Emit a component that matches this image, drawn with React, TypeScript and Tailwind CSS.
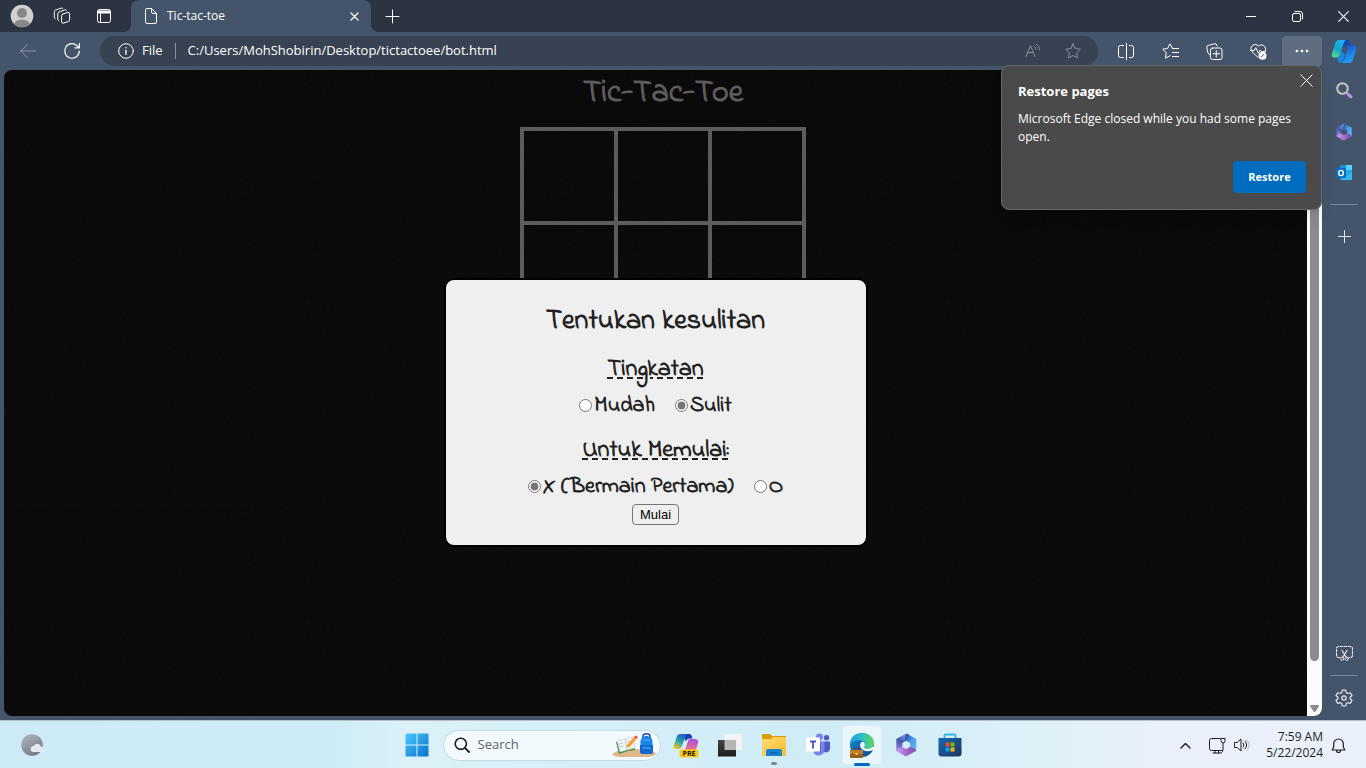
import { useState } from "react";
import type { ReactNode } from "react";

const boardCells = [
  [0, 1, 2],
  [3, 4, 5],
  [6, 7, 8],
];

function Line({ size = 16, children, className = "" }: { size?: number; children: ReactNode; className?: string }) {
  return (
    <svg
      width={size}
      height={size}
      viewBox={`0 0 ${size} ${size}`}
      fill="none"
      stroke="currentColor"
      strokeLinecap="round"
      strokeLinejoin="round"
      className={`shrink-0 ${className}`}
      aria-hidden="true"
    >
      {children}
    </svg>
  );
}

function TabStrip() {
  return (
    <header className="flex h-8 shrink-0 items-center bg-[#2b3440] text-white">
      <button aria-label="Profile" className="flex w-11 justify-center">
        <svg width="24" height="24" viewBox="0 0 24 24" aria-hidden="true">
          <defs>
            <clipPath id="avatar">
              <circle cx="12" cy="12" r="11.3" />
            </clipPath>
          </defs>
          <g clipPath="url(#avatar)">
            <rect width="24" height="24" fill="#d2d0ce" />
            <circle cx="12" cy="9" r="5" fill="#8a8886" />
            <ellipse cx="12" cy="21" rx="8" ry="5.6" fill="#8a8886" />
          </g>
        </svg>
      </button>
      <button aria-label="Workspaces" className="flex w-9 justify-center">
        <Line size={18}>
          <path d="M9.600 7.200 14.500 5.400a1.600 1.600 0 0 1 2.100 1.500v6a1.600 1.600 0 0 1-1.100 1.500l-4.800 1.700a1.600 1.600 0 0 1-2.100-1.500V8.700a1.600 1.600 0 0 1 1-1.500Z" />
          <path d="M5.800 13.800a1.600 1.600 0 0 1-1-1.500V6.600a1.600 1.600 0 0 1 1.100-1.500l6-2.200a1.500 1.500 0 0 1 1.500.3" />
          <path d="M2.300 11.800a1.600 1.600 0 0 1-1-1.500V4.700a1.600 1.600 0 0 1 1.100-1.500l6-2.100a1.500 1.500 0 0 1 1.500.3" />
        </Line>
      </button>
      <button aria-label="Tab actions" className="flex w-[47px] justify-center">
        <Line size={16}>
          <rect x="1.500" y="1.500" width="13" height="13" rx="2" />
          <path d="M2 3h12v2H2Z" fill="currentColor" />
          <path d="M4.500 5v9.500" />
        </Line>
      </button>
      <div className="flex h-8 items-end">
        <span className="-ml-1 size-2 bg-[radial-gradient(circle_at_0_0,transparent_8px,#44546a_8px)]" />
        <div className="flex h-8 w-60 items-center rounded-t-lg bg-[#44546a] px-3">
          <Line size={16}>
            <path d="M2.500 2A1.500 1.500 0 0 1 4 .5h4.500L13.500 5.500V14a1.500 1.500 0 0 1-1.500 1.500H4A1.500 1.500 0 0 1 2.500 14Z" />
            <path d="M8.500.5V4A1.500 1.500 0 0 0 10 5.500h3.500" />
          </Line>
          <span className="ml-2 flex-1 text-xs">Tic-tac-toe</span>
          <button aria-label="Close tab">
            <Line size={9}>
              <path d="m1 1 7 7M8 1 1 8" strokeWidth="1.200" />
            </Line>
          </button>
        </div>
        <span className="size-2 bg-[radial-gradient(circle_at_100%_0,transparent_8px,#44546a_8px)]" />
      </div>
      <button aria-label="New tab" className="ml-1.5">
        <Line size={15}>
          <path d="M7.500 1v13M1 7.500h13" />
        </Line>
      </button>
      <div className="ml-auto flex h-8">
        <button aria-label="Minimize" className="flex w-[46px] items-center justify-center">
          <Line size={10}>
            <path d="M0 5.500h10" />
          </Line>
        </button>
        <button aria-label="Restore down" className="flex w-[46px] items-center justify-center">
          <Line size={11}>
            <rect x=".5" y="2.500" width="8" height="8" rx="1.500" />
            <path d="M3 .5h5a2.500 2.500 0 0 1 2.500 2.500v5" />
          </Line>
        </button>
        <button aria-label="Close window" className="flex w-[46px] items-center justify-center">
          <Line size={11}>
            <path d="m.7.7 9.600 9.600M10.300.7.7 10.300" strokeWidth="1.100" />
          </Line>
        </button>
      </div>
    </header>
  );
}

function Toolbar() {
  return (
    <div className="flex h-[38px] shrink-0 items-center py-1 pl-1.5 text-white">
      <button aria-label="Back" className="flex w-11 justify-center text-[#8d97a4]">
        <Line size={16}>
          <path d="M15.500 8H.8M7.500 1.300.8 8l6.700 6.700" />
        </Line>
      </button>
      <button aria-label="Refresh" className="flex w-11 justify-center">
        <Line size={18}>
          <path d="M16.300 9A7.300 7.300 0 1 1 14.200 3.800L16 5.500" strokeWidth="1.200" />
          <path d="M16.300 1.500v4.300H12" strokeWidth="1.200" />
        </Line>
      </button>
      <div className="ml-1.5 flex h-[30px] flex-1 items-center rounded-full bg-[#374252] pl-[18px] pr-[17px]">
        <Line size={16}>
          <circle cx="8" cy="8" r="7.300" />
          <path d="M8 7.300v4" strokeWidth="1.300" />
          <circle cx="8" cy="4.700" r=".8" fill="currentColor" stroke="none" />
        </Line>
        <span className="ml-2 text-[13px]">File</span>
        <span className="mx-3 h-4 w-px bg-[#8a93a0]" />
        <input
          aria-label="Address"
          readOnly
          value="C:/Users/MohShobirin/Desktop/tictactoee/bot.html"
          className="min-w-0 flex-1 bg-transparent text-[13px] outline-none"
        />
        <button aria-label="Read aloud" className="mr-3 flex w-10 justify-center text-[#88909b]">
          <Line size={16}>
            <path d="m1 13.500 4.500-11 4.500 11M2.600 9.500h5.800" />
            <path d="M9.500 3.300a3.500 3.500 0 0 1 1.600 3.200M11.300 1.300A6 6 0 0 1 14.500 7" />
          </Line>
        </button>
        <button aria-label="Add to favorites" className="flex w-4 justify-center text-[#88909b]">
          <Line size={16}>
            <path d="m8 .8 2.200 4.700 5.100.7-3.700 3.600.9 5.200L8 12.500 3.500 15l.9-5.200L.7 6.200l5.100-.7Z" />
          </Line>
        </button>
      </div>
      <div className="ml-2 flex gap-1">
        <button aria-label="Split screen" className="flex h-[30px] w-10 items-center justify-center">
          <Line size={17}>
            <path d="M8.500.5v16M5.500 2.500h-3a2 2 0 0 0-2 2v8a2 2 0 0 0 2 2h3M11.500 2.500h2a2 2 0 0 1 2 2v8a2 2 0 0 1-2 2h-2" />
          </Line>
        </button>
        <button aria-label="Favorites" className="flex h-[30px] w-10 items-center justify-center">
          <Line size={17}>
            <path d="M11 5.500 10.300 5 8 .8 5.600 5.400.8 6.200l3.400 3.500-.8 5.500L8 12.700" />
            <path d="M10.500 5.500h6M10.500 9.500h6M10.500 13.500h6" />
          </Line>
        </button>
        <button aria-label="Collections" className="flex h-[30px] w-10 items-center justify-center">
          <Line size={17}>
            <path d="M3.500 11.500A2 2 0 0 1 2 10L.8 4.800a2 2 0 0 1 1.500-2.400L8.500.8a2 2 0 0 1 2.400 1.500l.2.800" />
            <rect x="4.500" y="5" width="11.500" height="11.500" rx="2" />
            <path d="M10.250 7.500v6.500M7 10.750h6.500" />
          </Line>
        </button>
        <button aria-label="Browser essentials" className="flex h-[30px] w-10 items-center justify-center">
          <Line size={17}>
            <path d="M8 14.500 2 8.700A4.300 4.300 0 0 1 8.500 3a4.300 4.300 0 0 1 6.800 5" />
            <path d="M.5 7.500h3.700l1.600-2.800 2.500 5.500 1.900-3.200 1.300 1.500h4" />
            <circle cx="12.500" cy="12.700" r="4" fill="currentColor" stroke="none" />
            <path d="m11.200 14 2.600-2.600" stroke="#44546a" />
          </Line>
        </button>
        <button aria-label="Settings and more" className="flex h-[30px] w-10 items-center justify-center rounded bg-[#5f6d80]">
          <svg width="14" height="4" viewBox="0 0 14 4" fill="currentColor" aria-hidden="true">
            <circle cx="2" cy="2" r="1.300" />
            <circle cx="7" cy="2" r="1.300" />
            <circle cx="12" cy="2" r="1.300" />
          </svg>
        </button>
      </div>
    </div>
  );
}

function Microsoft365Icon({ size, id }: { size: number; id: string }) {
  return (
    <svg width={size} height={size} viewBox="0 0 24 24" strokeLinejoin="round" aria-hidden="true">
      <defs>
        <linearGradient id={`${id}a`} x1=".7" y1="0" x2=".2" y2="1">
          <stop offset="0" stopColor="#7f9be8" />
          <stop offset=".5" stopColor="#4a55a8" />
          <stop offset="1" stopColor="#8f86e0" />
        </linearGradient>
        <linearGradient id={`${id}b`} x1="0" y1="0" x2="1" y2="1">
          <stop offset="0" stopColor="#234a94" />
          <stop offset=".5" stopColor="#4a9df0" />
          <stop offset="1" stopColor="#5fb8f4" />
        </linearGradient>
        <linearGradient id={`${id}c`} x1="0" y1="0" x2="1" y2="0">
          <stop offset="0" stopColor="#c3a4f4" />
          <stop offset=".5" stopColor="#a768cf" />
          <stop offset="1" stopColor="#7650a8" />
        </linearGradient>
      </defs>
      <path d="M12 1.500 14.500 2 12 7.200 7.500 9.700V14L3 17.500V6.500Z" fill={`url(#${id}a)`} stroke={`url(#${id}a)`} strokeWidth="1.500" />
      <path d="M12.500 1.500 21.500 6.500V17L17 14V9.700L11.500 6.700Z" fill={`url(#${id}b)`} stroke={`url(#${id}b)`} strokeWidth="1.500" />
      <path d="M3 17.500 7.500 14.500 12 17 16.500 14.500 21.500 17.300 12 22.700Z" fill={`url(#${id}c)`} stroke={`url(#${id}c)`} strokeWidth="1.500" />
    </svg>
  );
}

function CopilotIcon() {
  return (
    <svg width="26" height="25" viewBox="0 0 26 25" aria-hidden="true">
      <defs>
        <linearGradient id="copilotLeft" x1=".6" y1="0" x2=".2" y2="1">
          <stop offset="0" stopColor="#16b4f4" />
          <stop offset=".5" stopColor="#16a3cf" />
          <stop offset="1" stopColor="#5fdc80" />
        </linearGradient>
        <linearGradient id="copilotRight" x1=".3" y1="0" x2=".6" y2="1">
          <stop offset="0" stopColor="#1c52c8" />
          <stop offset=".6" stopColor="#1d87ec" />
          <stop offset="1" stopColor="#1fa2f5" />
        </linearGradient>
      </defs>
      <path d="M13.500 1H16c2 0 2.500 1 3 3l.5 2h-3c-2 0-2.600 1-3.200 3L11 6Z" fill="#1549b5" />
      <path d="M8 1h7c-1.500.6-2 2-2.500 3.500L9.300 15c-.6 2-1.600 3.500-4 3.500H3.500C1 18.500.3 16.700 1 14.500L4 4.500C4.700 2.200 6 1 8 1Z" fill="url(#copilotLeft)" />
      <path d="M16.500 6H22c2.800 0 4 1.800 3.300 4.300l-3 9.700c-.8 2.500-2 4-4.500 4h-7c1.400-.7 2-2 2.500-3.500l3-11C16.700 7.700 17 6.500 16.500 6Z" fill="url(#copilotRight)" />
      <path d="M5.500 18.500c2.200 0 3.200-1.400 3.800-3.500l1-3 3.500 3-1 4.500c-.6 2-1.400 4.500-3.300 4.500-2.500 0-2-3-4-5.500Z" fill="#1689df" />
    </svg>
  );
}

function Sidebar() {
  return (
    <aside className="flex w-11 shrink-0 flex-col items-center text-[#e2e6eb]">
      <button aria-label="Copilot" className="flex h-[38px] items-center">
        <CopilotIcon />
      </button>
      <button aria-label="Search" className="flex h-[41px] items-center">
        <svg width="17" height="17" viewBox="0 0 17 17" fill="none" aria-hidden="true">
          <circle cx="6.500" cy="6.500" r="5.300" stroke="#c9c7c5" strokeWidth="2" />
          <path d="m11.800 11.800 3.200 3" stroke="#bd8df0" strokeWidth="3" strokeLinecap="round" />
        </svg>
      </button>
      <button aria-label="Microsoft 365" className="flex h-[41px] items-center">
        <Microsoft365Icon size={18} id="ms" />
      </button>
      <button aria-label="Outlook" className="flex h-[41px] items-center">
        <svg width="16" height="16" viewBox="0 0 16 16" aria-hidden="true">
          <rect x="4" width="12" height="15" rx="1" fill="#1490df" />
          <path d="M10 0h5a1 1 0 0 1 1 1v4h-6Z" fill="#50d9ff" />
          <path d="M4 5h6v5H4Z" fill="#0364b8" />
          <path d="M10 5h6v4l-6 2Z" fill="#28a8ea" />
          <path d="m16 7.500-12 7.500h11a1 1 0 0 0 1-1Z" fill="#35b8f1" />
          <rect y="3" width="10" height="10" rx="1" fill="#0f6cbd" />
          <ellipse cx="5" cy="8" rx="2.300" ry="2.600" fill="none" stroke="#fff" strokeWidth="1.400" />
        </svg>
      </button>
      <span className="my-[11px] h-px w-7 bg-[#7c8898]" />
      <button aria-label="Customize" className="flex h-[41px] items-center">
        <Line size={13}>
          <path d="M6.500.5v12M.5 6.500h12" />
        </Line>
      </button>
      <button aria-label="Screenshot" className="mt-auto flex h-11 items-center">
        <Line size={17}>
          <path d="M4 12.500H2.500a2 2 0 0 1-2-2v-7a2 2 0 0 1 2-2h12a2 2 0 0 1 2 2v7a2 2 0 0 1-2 2H13" strokeDasharray="2.500 1.500" strokeWidth="1.200" />
          <path d="m6 5.500 4 6.500M11 5.500 7 12" strokeWidth="1.200" />
          <circle cx="6.200" cy="13.700" r="1.600" />
          <circle cx="10.800" cy="13.700" r="1.600" />
        </Line>
      </button>
      <span className="h-px w-7 shrink-0 bg-[#7c8898]" />
      <button aria-label="Settings" className="flex h-11 items-center">
        <Line size={18}>
          <path
            d="M7.300 1.100h3.400l.6 2.500 1.500.9 2.500-.8 1.700 2.900-1.900 1.700v1.500l1.900 1.700-1.700 2.900-2.500-.8-1.500.9-.6 2.500H7.300l-.6-2.500-1.500-.9-2.500.8L1 11.500l1.900-1.700V8.300L1 6.600l1.700-2.900 2.500.8 1.500-.9Z"
            strokeWidth="1.200"
          />
          <circle cx="9" cy="9" r="2.100" strokeWidth="1.200" />
        </Line>
      </button>
    </aside>
  );
}

function Choice({ name, label, checked, onSelect }: { name: string; label: string; checked: boolean; onSelect: () => void }) {
  return (
    <label className="flex items-center gap-0.5 leading-6">
      <input type="radio" name={name} checked={checked} onChange={onSelect} className="mb-0.5 size-[13px] accent-[#767676]" />
      {label}
    </label>
  );
}

function DifficultyDialog() {
  const [level, setLevel] = useState("Sulit");
  const [mark, setMark] = useState("X");
  return (
    <section
      role="dialog"
      aria-labelledby="dialog-title"
      className="absolute left-1/2 top-[208px] flex w-[424px] -translate-x-1/2 flex-col items-center rounded-[10px] border-2 border-black bg-[#efefef] pb-5 pt-[22px] font-['Indie_Flower',cursive] text-[22px] font-bold text-[#222]"
    >
      <h2 id="dialog-title" className="text-[28px] leading-10">
        Tentukan kesulitan
      </h2>
      <h3 className="mt-3.5 text-2xl leading-7 underline decoration-dashed decoration-2 underline-offset-2">Tingkatan</h3>
      <div className="mt-2.5 flex gap-5">
        <Choice name="level" label="Mudah" checked={level === "Mudah"} onSelect={() => setLevel("Mudah")} />
        <Choice name="level" label="Sulit" checked={level === "Sulit"} onSelect={() => setLevel("Sulit")} />
      </div>
      <h3 className="mt-[19px] text-2xl leading-7 underline decoration-dashed decoration-2 underline-offset-2">Untuk Memulai:</h3>
      <div className="mt-2.5 flex gap-5">
        <Choice name="mark" label="X (Bermain Pertama)" checked={mark === "X"} onSelect={() => setMark("X")} />
        <Choice name="mark" label="O" checked={mark === "O"} onSelect={() => setMark("O")} />
      </div>
      <button className="mt-[5px] h-[21px] rounded-sm border border-[#767676] px-[7px] font-['Liberation_Sans',sans-serif] text-[13px] font-normal leading-4 text-black">
        Mulai
      </button>
    </section>
  );
}

function GamePage() {
  return (
    <div className="mb-1 ml-1 flex min-h-0 flex-1 overflow-hidden rounded-lg bg-[#090909]">
      <main className="relative min-w-0 flex-1 overflow-hidden">
        <svg className="absolute inset-0 size-full opacity-5" aria-hidden="true">
          <filter id="grain">
            <feTurbulence type="fractalNoise" baseFrequency="0.8" numOctaves="2" />
            <feColorMatrix values="0 0 0 0 .35  0 0 0 0 .35  0 0 0 0 .35  1 1 0 0 -.7" />
          </filter>
          <rect width="100%" height="100%" filter="url(#grain)" />
        </svg>
        <div className="flex flex-col items-center pl-[15px] text-[#5c5c5c]">
          <h1 className="font-['Indie_Flower',cursive] text-[32px] font-bold leading-[48px]">Tic-Tac-Toe</h1>
          <table className="mt-[9px] border-collapse">
            <tbody>
              {boardCells.map((row) => (
                <tr key={row[0]}>
                  {row.map((cell) => (
                    <td key={cell} className="h-[94px] w-[94px] border-4 border-[#5c5c5c] p-0" />
                  ))}
                </tr>
              ))}
            </tbody>
          </table>
        </div>
        <DifficultyDialog />
      </main>
      <div className="flex w-[15px] flex-col items-center bg-[#fcfcfc] py-1">
        <svg width="9" height="7" viewBox="0 0 9 7" fill="#8b8b8b" aria-hidden="true">
          <path d="M4.500 0 9 7H0Z" />
        </svg>
        <span className="mt-1 w-[9px] flex-1 rounded-full bg-[#8b8b8b]" />
        <svg className="mt-11" width="9" height="7" viewBox="0 0 9 7" fill="#8b8b8b" aria-hidden="true">
          <path d="M1 0h7a1 1 0 0 1 .8 1.500L5.400 6.500a1 1 0 0 1-1.800 0L.2 1.500A1 1 0 0 1 1 0Z" />
        </svg>
      </div>
    </div>
  );
}

function RestorePopup() {
  return (
    <section
      aria-label="Restore pages"
      className="absolute right-11 top-[33px] flex w-[321px] flex-col rounded-lg border border-[#676767] bg-[#4a4a4a] p-4 pr-[15px] text-white shadow-lg"
    >
      <button aria-label="Close" className="absolute right-2 top-2">
        <Line size={13}>
          <path d="m.8.8 11.400 11.400M12.200.8.8 12.200" />
        </Line>
      </button>
      <h2 className="text-[13px] font-bold leading-[18px]">Restore pages</h2>
      <p className="mt-2.5 text-xs leading-[18px]">Microsoft Edge closed while you had some pages open.</p>
      <button className="mt-[15px] h-8 w-[73px] self-end rounded-sm bg-[#006cbe] text-[11px] font-bold">Restore</button>
    </section>
  );
}

function TaskButton({ label, children, active = false }: { label: string; children: ReactNode; active?: boolean }) {
  return (
    <button aria-label={label} className="relative flex h-12 w-11 items-center justify-center">
      {active && <span className="absolute inset-x-[3px] inset-y-[5px] rounded bg-[#e9f6fc] ring-1 ring-[#dceef6]" />}
      <span className="relative">{children}</span>
    </button>
  );
}

function Taskbar() {
  return (
    <footer className="grid h-12 shrink-0 grid-cols-[1fr_auto_1fr] items-center border-t border-[#b4c0c8] bg-[linear-gradient(90deg,#cdebf7_0%,#cdecf7_24%,#dbf1f7_30%,#cfecf7_60%,#dcf0f8_75%,#e9f0fa_85%,#eaf1fb_100%)] pb-0.5 text-[#1c1c1c]">
      <button aria-label="Weather" className="ml-5 w-6">
        <svg width="24" height="24" viewBox="0 0 24 24" aria-hidden="true">
          <defs>
            <linearGradient id="moon" x1="0" y1="0" x2=".6" y2="1">
              <stop offset="0" stopColor="#b4bac4" />
              <stop offset="1" stopColor="#747b86" />
            </linearGradient>
          </defs>
          <circle cx="12" cy="12" r="10.800" fill="url(#moon)" />
          <path d="M13.500 19a3 3 0 0 1 .2-6 4 4 0 0 1 7.300.5 2.800 2.800 0 0 1 .3 5.500Z" fill="#e6e8ec" />
        </svg>
      </button>
      <div className="flex items-center">
        <TaskButton label="Start">
          <svg width="24" height="24" viewBox="0 0 24 24" aria-hidden="true">
            <defs>
              <linearGradient id="win" x1="0" y1="0" x2="1" y2="1">
                <stop offset="0" stopColor="#4cc9fb" />
                <stop offset="1" stopColor="#0570cf" />
              </linearGradient>
            </defs>
            <path d="M1.500.5h10v11h-11v-10a1 1 0 0 1 1-1ZM12.500.5h10a1 1 0 0 1 1 1v10h-11ZM.5 12.500h11v11h-10a1 1 0 0 1-1-1ZM12.500 12.500h11v10a1 1 0 0 1-1 1h-10Z" fill="url(#win)" />
          </svg>
        </TaskButton>
        <label className="mx-1 flex h-[31px] w-[218px] items-center rounded-full border border-[#c3dbe4] bg-[#f3fafd] pl-2.5 pr-1">
          <Line size={16}>
            <circle cx="6.800" cy="6.800" r="5.600" strokeWidth="1.600" />
            <path d="m11 11 4 4" strokeWidth="1.800" />
          </Line>
          <input
            aria-label="Search"
            placeholder="Search"
            className="ml-2 w-full min-w-0 flex-1 bg-transparent text-[13px] outline-none placeholder:text-[#5d6265]"
          />
          <svg width="44" height="25" viewBox="0 0 44 25" className="shrink-0" aria-hidden="true">
            <path d="M0 21c2-2 9-5 20-5s21 2 24 4c-1 3-6 4-9 4H9C5 24 1 23 0 21Z" fill="#dfb78a" />
            <path d="m4 9 9-2 8-1 2 11-7 1-9 3Z" fill="#3f8f4b" />
            <path d="m5 8 8-2 2 11-7 2ZM13 6l8-2 2 11-8 2Z" fill="#f4f5f7" stroke="#b9bfc8" strokeWidth=".5" />
            <path d="m7 11 4-1M7.500 14l4-1M15 9l3-1" stroke="#9ba5c3" strokeWidth=".7" />
            <path d="m15 12 7-8 2.500 2-7 8-3 1Z" fill="#f6a12b" />
            <path d="m22 4 1.500-1.700 2.500 2L24.500 6Z" fill="#e8504c" />
            <path d="M31 5V3c0-3 7-3 7 0v2" fill="none" stroke="#164fae" strokeWidth="1.500" />
            <path d="M28.500 9c0-8 12-8 12 0v11h-12Z" fill="#1784e6" />
            <path d="M28 12h13v7a2 2 0 0 1-2 2h-9a2 2 0 0 1-2-2Z" fill="#1169d2" />
            <path d="M31 7h7M30.500 15h8" stroke="#64b8fa" />
          </svg>
        </label>
        <div className="-ml-px flex">
          <TaskButton label="Copilot preview">
            <svg width="26" height="26" viewBox="0 0 26 26" aria-hidden="true">
              <defs>
                <linearGradient id="cl" x1=".7" y1="0" x2=".2" y2="1">
                  <stop offset="0" stopColor="#2454d0" />
                  <stop offset=".5" stopColor="#27a3ad" />
                  <stop offset="1" stopColor="#f7c91d" />
                </linearGradient>
                <linearGradient id="cr" x1=".5" y1="0" x2=".4" y2="1">
                  <stop offset="0" stopColor="#a64fe4" />
                  <stop offset="1" stopColor="#f97282" />
                </linearGradient>
              </defs>
              <path d="M13 2h3c2 0 2.500 1 3.500 4.500h-3c-2 0-3 1-3.500 3L11 6Z" fill="#173fb0" />
              <path d="M7.500 2h7c-1.500.7-2 2-2.500 3.500L9 14c-.7 2-1.700 3-3.500 3H3c-2 0-3-1.600-2.300-3.600L3.700 5C4.500 2.800 5.500 2 7.500 2Z" fill="url(#cl)" />
              <path d="M16.500 7H21c3.500 0 5 2 4 4.500l-2.500 7H10c1.800-.5 2.500-2 3-3.500l2-6c.3-1 .8-1.700 1.500-2Z" fill="url(#cr)" />
              <rect x="6.500" y="17.500" width="19" height="8" rx="2" fill="#fcc915" />
              <text x="16" y="24.200" textAnchor="middle" className="fill-[#1e1600] font-['Open_Sans',sans-serif] text-[7px] font-bold">
                PRE
              </text>
            </svg>
          </TaskButton>
          <TaskButton label="Task view">
            <svg width="24" height="24" viewBox="0 0 24 24" aria-hidden="true">
              <defs>
                <linearGradient id="tvd" x1="0" y1="0" x2="0" y2="1">
                  <stop offset="0" stopColor="#454545" />
                  <stop offset="1" stopColor="#1b1b1b" />
                </linearGradient>
              </defs>
              <rect x="6.500" y="1" width="17.500" height="16" fill="#f3f3f3" />
              <rect x="0" y="7" width="18" height="16.500" fill="url(#tvd)" />
              <path d="M6.500 7H18v10H6.500Z" fill="#b4b4b4" />
            </svg>
          </TaskButton>
          <TaskButton label="File Explorer">
            <svg width="26" height="24" viewBox="0 0 26 24" aria-hidden="true">
              <defs>
                <linearGradient id="fold" x1="0" y1="0" x2="1" y2="1">
                  <stop offset="0" stopColor="#ffdb74" />
                  <stop offset="1" stopColor="#fabd30" />
                </linearGradient>
              </defs>
              <path d="M1 2a1 1 0 0 1 1-1h7l2 2h13a1 1 0 0 1 1 1v4H1Z" fill="#d99b08" />
              <path d="M1 6h9l2-2h12a1 1 0 0 1 1 1v17a1 1 0 0 1-1 1H2a1 1 0 0 1-1-1Z" fill="url(#fold)" />
              <path d="M5 23v-5a2 2 0 0 1 2-2h12a2 2 0 0 1 2 2v5Z" fill="#1583d4" />
              <path d="M9 20h8" stroke="#0b62a8" strokeWidth="1.500" />
            </svg>
            <span className="absolute -bottom-2 left-2.5 h-[3px] w-1.5 rounded-full bg-[#7d8a90]" />
          </TaskButton>
          <TaskButton label="Teams">
            <svg width="26" height="24" viewBox="0 0 26 24" aria-hidden="true">
              <circle cx="14.500" cy="4" r="3.500" fill="#7b83eb" />
              <circle cx="21.500" cy="4.800" r="2.700" fill="#5059c9" />
              <path d="M18 8.500h7v7.500a4 4 0 0 1-7 2Z" fill="#5059c9" />
              <path d="M9 8.500h10.500v8a6 6 0 0 1-10.500 4Z" fill="#7b83eb" />
              <path d="M15 8.500h1v10H9V8.500Z" fill="#5e66c7" />
              <rect x="1" y="4.500" width="14" height="14" rx="1" fill="#fff" />
              <path d="M5 8.500h6M8 8.500v7" stroke="#4b53bc" strokeWidth="1.800" />
            </svg>
          </TaskButton>
          <TaskButton label="Microsoft Edge" active>
            <svg width="26" height="26" viewBox="0 0 26 26" aria-hidden="true">
              <defs>
                <linearGradient id="e1" x1="0" y1=".3" x2="1" y2=".3">
                  <stop offset="0" stopColor="#1b9fdf" />
                  <stop offset=".5" stopColor="#2cc0c8" />
                  <stop offset="1" stopColor="#62d75a" />
                </linearGradient>
                <linearGradient id="e2" x1="0" y1="0" x2="1" y2="1">
                  <stop offset="0" stopColor="#1b88d8" />
                  <stop offset="1" stopColor="#0c4a8c" />
                </linearGradient>
              </defs>
              <circle cx="13" cy="13" r="12" fill="url(#e2)" />
              <path d="M1 13C1 5 6.500 1 13 1c7 0 12 4.500 12 10 0 4-3 6-6 6-3 0-4.500-1-4-2 1.500-2 1-5.500-3-6.500C7 7.500 3 9 1 13Z" fill="url(#e1)" />
              <path d="M14 9.800c-2.600.2-3.600 3-2.300 5.600 2 3.800 7.300 4.900 12.300 2.600l2 1V15l-2-.5c-2 2.500-6 3-8.300 1.800-1.200-.7-.7-1.300-.2-2.100.8-1.500.5-3.300-1.500-4.400Z" fill="#f0f9fd" />
              <rect x="1" y="18" width="13" height="8" rx="1" fill="#9a5c19" />
              <path d="M1 18h13v4H1Z" fill="#c27d2b" />
              <path d="M5.500 18v-1.500h4V18" stroke="#704010" fill="none" />
              <path d="M6.500 21h2v2h-2Z" fill="#ffd15c" />
            </svg>
            <span className="absolute -bottom-2 left-[5px] h-[3px] w-4 rounded-full bg-[#0067c0]" />
          </TaskButton>
          <TaskButton label="Microsoft 365">
            <Microsoft365Icon size={24} id="tb" />
          </TaskButton>
          <TaskButton label="Microsoft Store">
            <svg width="24" height="24" viewBox="0 0 24 24" aria-hidden="true">
              <defs>
                <linearGradient id="store" x1="0" y1="0" x2="1" y2="1">
                  <stop offset="0" stopColor="#1569b4" />
                  <stop offset="1" stopColor="#1e355c" />
                </linearGradient>
              </defs>
              <path d="M6.500 6V2.500a1 1 0 0 1 1-1h9a1 1 0 0 1 1 1V6" fill="none" stroke="#31b9ee" strokeWidth="1.800" />
              <path d="M.5 5h23v15.500a3 3 0 0 1-3 3h-17a3 3 0 0 1-3-3Z" fill="url(#store)" />
              <path d="M7.500 9.500h4v4h-4Z" fill="#f25022" />
              <path d="M12.500 9.500h4v4h-4Z" fill="#7fba00" />
              <path d="M7.500 14.500h4v4h-4Z" fill="#00a4ef" />
              <path d="M12.500 14.500h4v4h-4Z" fill="#ffb900" />
            </svg>
          </TaskButton>
        </div>
      </div>
      <div className="flex items-center justify-end pr-5">
        <button aria-label="Show hidden icons" className="mr-[18px]">
          <Line size={11}>
            <path d="m1 8 4.500-4.500L10 8" strokeWidth="1.400" />
          </Line>
        </button>
        <button aria-label="Network and volume" className="mr-4 flex items-center gap-2">
          <Line size={17}>
            <path d="M10.500 1.500h-8a2 2 0 0 0-2 2v8a2 2 0 0 0 2 2h10.300M6 13.500v2.500M9.500 13.500v2.500M4 16h8M14 6.500v6.500a3 3 0 0 1-1.500 2.500M12 1.500h4v2.500a2 2 0 0 1-4 0Z" />
          </Line>
          <Line size={16}>
            <path d="M.8 5.500h2.400L7 2v12l-3.800-3.500H.8ZM9.200 6a3 3 0 0 1 0 4M11.200 4.200a5.500 5.500 0 0 1 0 7.600" />
            <path d="M13.200 2.700a8 8 0 0 1 0 10.600" stroke="#b7bdc4" />
          </Line>
        </button>
        <time className="text-right text-xs leading-4">
          7:59 AM
          <br />
          5/22/2024
        </time>
        <button aria-label="Notifications" className="ml-2">
          <Line size={15}>
            <path d="M7.500 1a4.800 4.800 0 0 1 4.800 4.800V9l1.500 3H1.200l1.500-3V5.800A4.800 4.800 0 0 1 7.500 1ZM5.500 12.500a2 2 0 0 0 4 0" strokeWidth="1.200" />
          </Line>
        </button>
      </div>
    </footer>
  );
}

export default function App() {
  return (
    <div className="flex h-screen flex-col overflow-hidden bg-[#44546a] font-['Segoe_UI','Open_Sans',sans-serif]">
      <TabStrip />
      <div className="relative flex min-h-0 flex-1">
        <div className="flex min-w-0 flex-1 flex-col">
          <Toolbar />
          <GamePage />
        </div>
        <Sidebar />
        <RestorePopup />
      </div>
      <Taskbar />
    </div>
  );
}
